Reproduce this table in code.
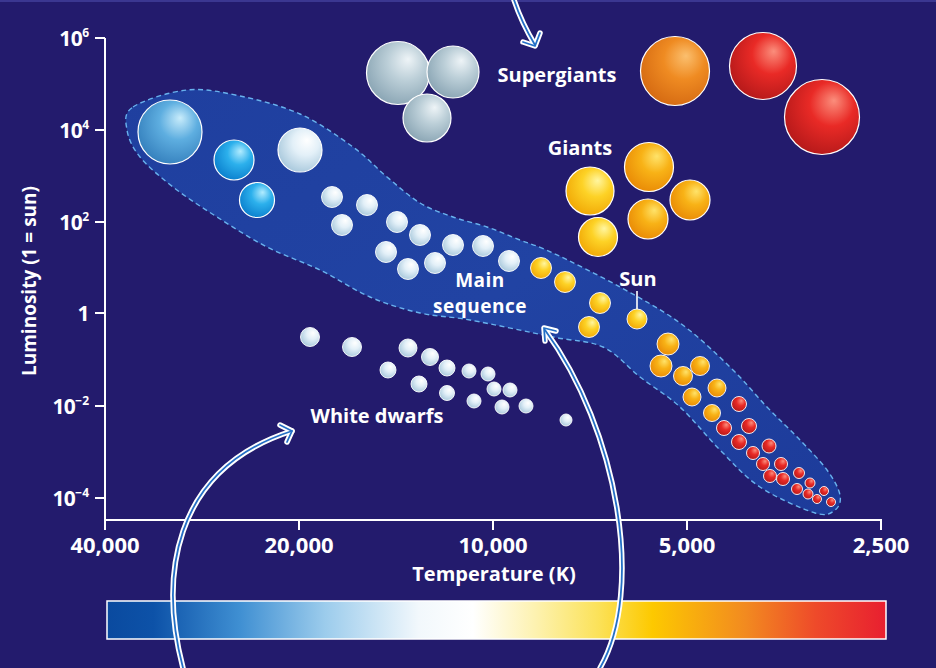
type Pt = [number, number];
type Star = [string, number, number, number];

const palettes: Record<string, [string, string, string]> = {
  steel: ["#c8ecfb", "#5eaee0", "#3580bd"],
  cyan: ["#b2ecff", "#2cb0ec", "#0a7fcd"],
  white: ["#ffffff", "#e3f0f8", "#a8c8dc"],
  gray: ["#eef4f7", "#bccfd8", "#8aa5b4"],
  yellow: ["#fff6a0", "#fdd226", "#f1a806"],
  amber: ["#ffe36a", "#f8b216", "#e98a06"],
  orange: ["#fbbf6e", "#ef8b22", "#d56a12"],
  red: ["#fb8e7c", "#e92a26", "#b5191a"],
};

const stars: Star[] = [
  // supergiants
  ["gray", 398, 73, 31.5],
  ["gray", 453, 72, 26],
  ["gray", 427, 118, 24],
  ["orange", 675, 71, 34.5],
  ["red", 763, 66, 33.5],
  ["red", 822, 117, 37.5],
  // giants
  ["yellow", 590, 191, 24],
  ["yellow", 598, 237, 19.5],
  ["amber", 649, 167, 24.5],
  ["amber", 690, 200, 20],
  ["amber", 648, 219, 20],
  // main sequence
  ["steel", 170, 132, 32],
  ["cyan", 234, 160, 20],
  ["cyan", 257, 200, 17.5],
  ["white", 300, 150, 22],
  ["white", 332, 197, 10.5],
  ["white", 367, 205, 10.5],
  ["white", 342, 225, 10.5],
  ["white", 397, 222, 10.5],
  ["white", 420, 235, 10.5],
  ["white", 386, 252, 10.5],
  ["white", 453, 245, 10.5],
  ["white", 483, 246, 10.5],
  ["white", 408, 269, 10.5],
  ["white", 435, 263, 10.5],
  ["white", 509, 261, 10.5],
  ["yellow", 541, 268, 10.5],
  ["yellow", 565, 282, 10.5],
  ["yellow", 600, 303, 10.5],
  ["yellow", 589, 327, 10.5],
  ["yellow", 637, 319, 10],
  ["amber", 668, 344, 11],
  ["amber", 661, 366, 11],
  ["amber", 683, 376, 9.5],
  ["amber", 700, 366, 9.5],
  ["amber", 717, 388, 9],
  ["amber", 692, 397, 9],
  ["amber", 712, 413, 8.5],
  ["red", 739, 404, 7.5],
  ["red", 749, 426, 7.5],
  ["red", 724, 428, 7.5],
  ["red", 739, 442, 7.5],
  ["red", 769, 446, 7],
  ["red", 753, 453, 6.5],
  ["red", 763, 464, 6.5],
  ["red", 781, 464, 6.5],
  ["red", 770, 476, 6.5],
  ["red", 783, 479, 6.5],
  ["red", 799, 473, 5.5],
  ["red", 810, 483, 5],
  ["red", 797, 489, 5.5],
  ["red", 808, 494, 5],
  ["red", 824, 491, 4.5],
  ["red", 817, 499, 4.5],
  ["red", 831, 502, 4.5],
  // white dwarfs
  ["white", 310, 337, 9.5],
  ["white", 352, 347, 9.5],
  ["white", 408, 348, 9],
  ["white", 430, 357, 8.5],
  ["white", 388, 370, 8],
  ["white", 447, 368, 8],
  ["white", 469, 371, 7],
  ["white", 488, 374, 7],
  ["white", 419, 384, 8],
  ["white", 447, 393, 7.5],
  ["white", 494, 389, 7],
  ["white", 510, 390, 7],
  ["white", 474, 401, 7],
  ["white", 502, 407, 7],
  ["white", 526, 406, 7],
  ["white", 566, 420, 6],
];

const blob: Pt[] = [
  [133, 107], [187, 90], [240, 96], [300, 114], [353, 147], [387, 177],
  [420, 203], [453, 217], [487, 227], [520, 240], [553, 253], [620, 287],
  [680, 323], [730, 367], [767, 407], [800, 440], [827, 470], [840, 495],
  [835, 510], [815, 513], [760, 487], [720, 450], [680, 407], [640, 377],
  [603, 347], [553, 337], [470, 320], [420, 313], [370, 297], [320, 270],
  [267, 247], [217, 217], [173, 187], [140, 157], [127, 130],
];

// closed catmull-rom through the outline points
function smoothClosed(pts: Pt[]) {
  const n = pts.length;
  let d = `M ${pts[0][0]} ${pts[0][1]}`;
  for (let i = 0; i < n; i++) {
    const p0 = pts[(i - 1 + n) % n];
    const p1 = pts[i];
    const p2 = pts[(i + 1) % n];
    const p3 = pts[(i + 2) % n];
    const c1x = p1[0] + (p2[0] - p0[0]) / 6;
    const c1y = p1[1] + (p2[1] - p0[1]) / 6;
    const c2x = p2[0] - (p3[0] - p1[0]) / 6;
    const c2y = p2[1] - (p3[1] - p1[1]) / 6;
    d += ` C ${c1x.toFixed(1)} ${c1y.toFixed(1)} ${c2x.toFixed(1)} ${c2y.toFixed(1)} ${p2[0]} ${p2[1]}`;
  }
  return d + " Z";
}

const arrows = [
  { d: "M 514 0 C 520 18 526 30 535 45", head: "M 523 42 L 535 46 L 540 33" },
  { d: "M 183 668 C 160 580 170 470 292 431", head: "M 280 425 L 292 431 L 287 442" },
  { d: "M 600 668 C 645 590 618 430 545 330", head: "M 556 331 L 544 328 L 545 341" },
];

const yTicks = [
  { y: 38, base: "10", exp: "6" },
  { y: 130, base: "10", exp: "4" },
  { y: 222, base: "10", exp: "2" },
  { y: 313, base: "1", exp: "" },
  { y: 406, base: "10", exp: "−2" },
  { y: 498, base: "10", exp: "−4" },
];

const xTicks = [
  { x: 105, label: "40,000" },
  { x: 299, label: "20,000" },
  { x: 493, label: "10,000" },
  { x: 687, label: "5,000" },
  { x: 881, label: "2,500" },
];

const barStops: [number, string][] = [
  [0, "#0a4a9f"],
  [0.06, "#0d52a8"],
  [0.17, "#3f8fd2"],
  [0.28, "#9cccec"],
  [0.4, "#f2f8fc"],
  [0.47, "#ffffff"],
  [0.55, "#fdf2b0"],
  [0.63, "#fbe25a"],
  [0.7, "#fdc900"],
  [0.82, "#f28a20"],
  [0.91, "#ee4a2a"],
  [1, "#e81f30"],
];

export default function App() {
  return (
    <div className="relative w-[936px] h-[668px] overflow-hidden bg-[#231b6d]">
      <svg
        width={936}
        height={668}
        viewBox="0 0 936 668"
        className="block"
        fontFamily="'Open Sans', 'DejaVu Sans', sans-serif"
        fontWeight={700}
      >
        <defs>
          {Object.entries(palettes).map(([id, [hi, mid, edge]]) => (
            <radialGradient key={id} id={`star-${id}`} cx="0.6" cy="0.38" r="0.66" fx="0.66" fy="0.28">
              <stop offset="0" stopColor={hi} />
              <stop offset="0.45" stopColor={mid} />
              <stop offset="1" stopColor={edge} />
            </radialGradient>
          ))}
          <linearGradient id="blob-fill" x1="0" y1="0" x2="1" y2="1">
            <stop offset="0" stopColor="#1f3f9f" />
            <stop offset="0.5" stopColor="#2143a3" />
            <stop offset="1" stopColor="#1d3b9a" />
          </linearGradient>
          <linearGradient id="temp-bar" x1="0" y1="0" x2="1" y2="0">
            {barStops.map(([o, c]) => (
              <stop key={o} offset={o} stopColor={c} />
            ))}
          </linearGradient>
        </defs>

        <rect x={0} y={0} width={936} height={2} fill="#3b3791" />

        {/* main sequence band */}
        <path
          d={smoothClosed(blob)}
          fill="url(#blob-fill)"
          stroke="#68b2ee"
          strokeWidth={1.4}
          strokeDasharray="5 3.5"
        />

        {/* axes */}
        <g stroke="#ffffff" strokeWidth={2} fill="none">
          <line x1={105} y1={38} x2={105} y2={530} />
          <line x1={104} y1={520} x2={882} y2={520} />
          {yTicks.map((t) => (
            <line key={t.y} x1={95} y1={t.y} x2={105} y2={t.y} />
          ))}
          {xTicks.slice(1).map((t) => (
            <line key={t.x} x1={t.x} y1={520} x2={t.x} y2={530} />
          ))}
        </g>

        <g fill="#ffffff" fontSize={20}>
          {yTicks.map((t) => (
            <text key={t.y} x={89} y={t.y + 8} textAnchor="end" letterSpacing={-0.6} fontSize={21}>
              {t.base}
              {t.exp && (
                <tspan fontSize={12} dy={-9} letterSpacing={0}>
                  {t.exp}
                </tspan>
              )}
            </text>
          ))}
          {xTicks.map((t) => (
            <text key={t.x} x={t.x} y={553} textAnchor="middle" fontSize={22}>
              {t.label}
            </text>
          ))}
          <text x={494} y={581} textAnchor="middle">
            Temperature (K)
          </text>
          <text transform="translate(36 281) rotate(-90)" textAnchor="middle" fontSize={19}>
            Luminosity (1 = sun)
          </text>

          <text x={557} y={82} textAnchor="middle">Supergiants</text>
          <text x={580} y={155} textAnchor="middle">Giants</text>
          <text x={638} y={286} textAnchor="middle">Sun</text>
          <text x={377} y={423} textAnchor="middle">White dwarfs</text>
        </g>
        <line x1={637} y1={291} x2={637} y2={309} stroke="#ffffff" strokeWidth={1.6} />

        {/* stars */}
        {stars.map(([p, cx, cy, r], i) => (
          <circle
            key={i}
            cx={cx}
            cy={cy}
            r={r}
            fill={`url(#star-${p})`}
            stroke="#ffffff"
            strokeWidth={r > 15 ? 1.2 : 0.9}
          />
        ))}

        {/* temperature colour bar */}
        <rect x={107} y={601} width={779} height={38} fill="url(#temp-bar)" stroke="#ffffff" strokeWidth={1.5} />

        {/* arrows */}
        {arrows.map((a, i) => (
          <g key={i} fill="none" strokeLinecap="round" strokeLinejoin="round">
            <path d={a.d} stroke="#ffffff" strokeWidth={5.5} />
            <path d={a.head} stroke="#ffffff" strokeWidth={5.5} />
            <path d={a.d} stroke="#2470c6" strokeWidth={1.8} />
            <path d={a.head} stroke="#2470c6" strokeWidth={1.8} />
          </g>
        ))}
      </svg>

      {/* two-line label sitting on the band */}
      <div className="absolute left-[420px] top-[267px] w-[120px] text-center font-['Open_Sans',sans-serif] text-[19px] font-bold leading-[26px] tracking-[0.5px] text-white">
        Main
        <br />
        sequence
      </div>
    </div>
  );
}
